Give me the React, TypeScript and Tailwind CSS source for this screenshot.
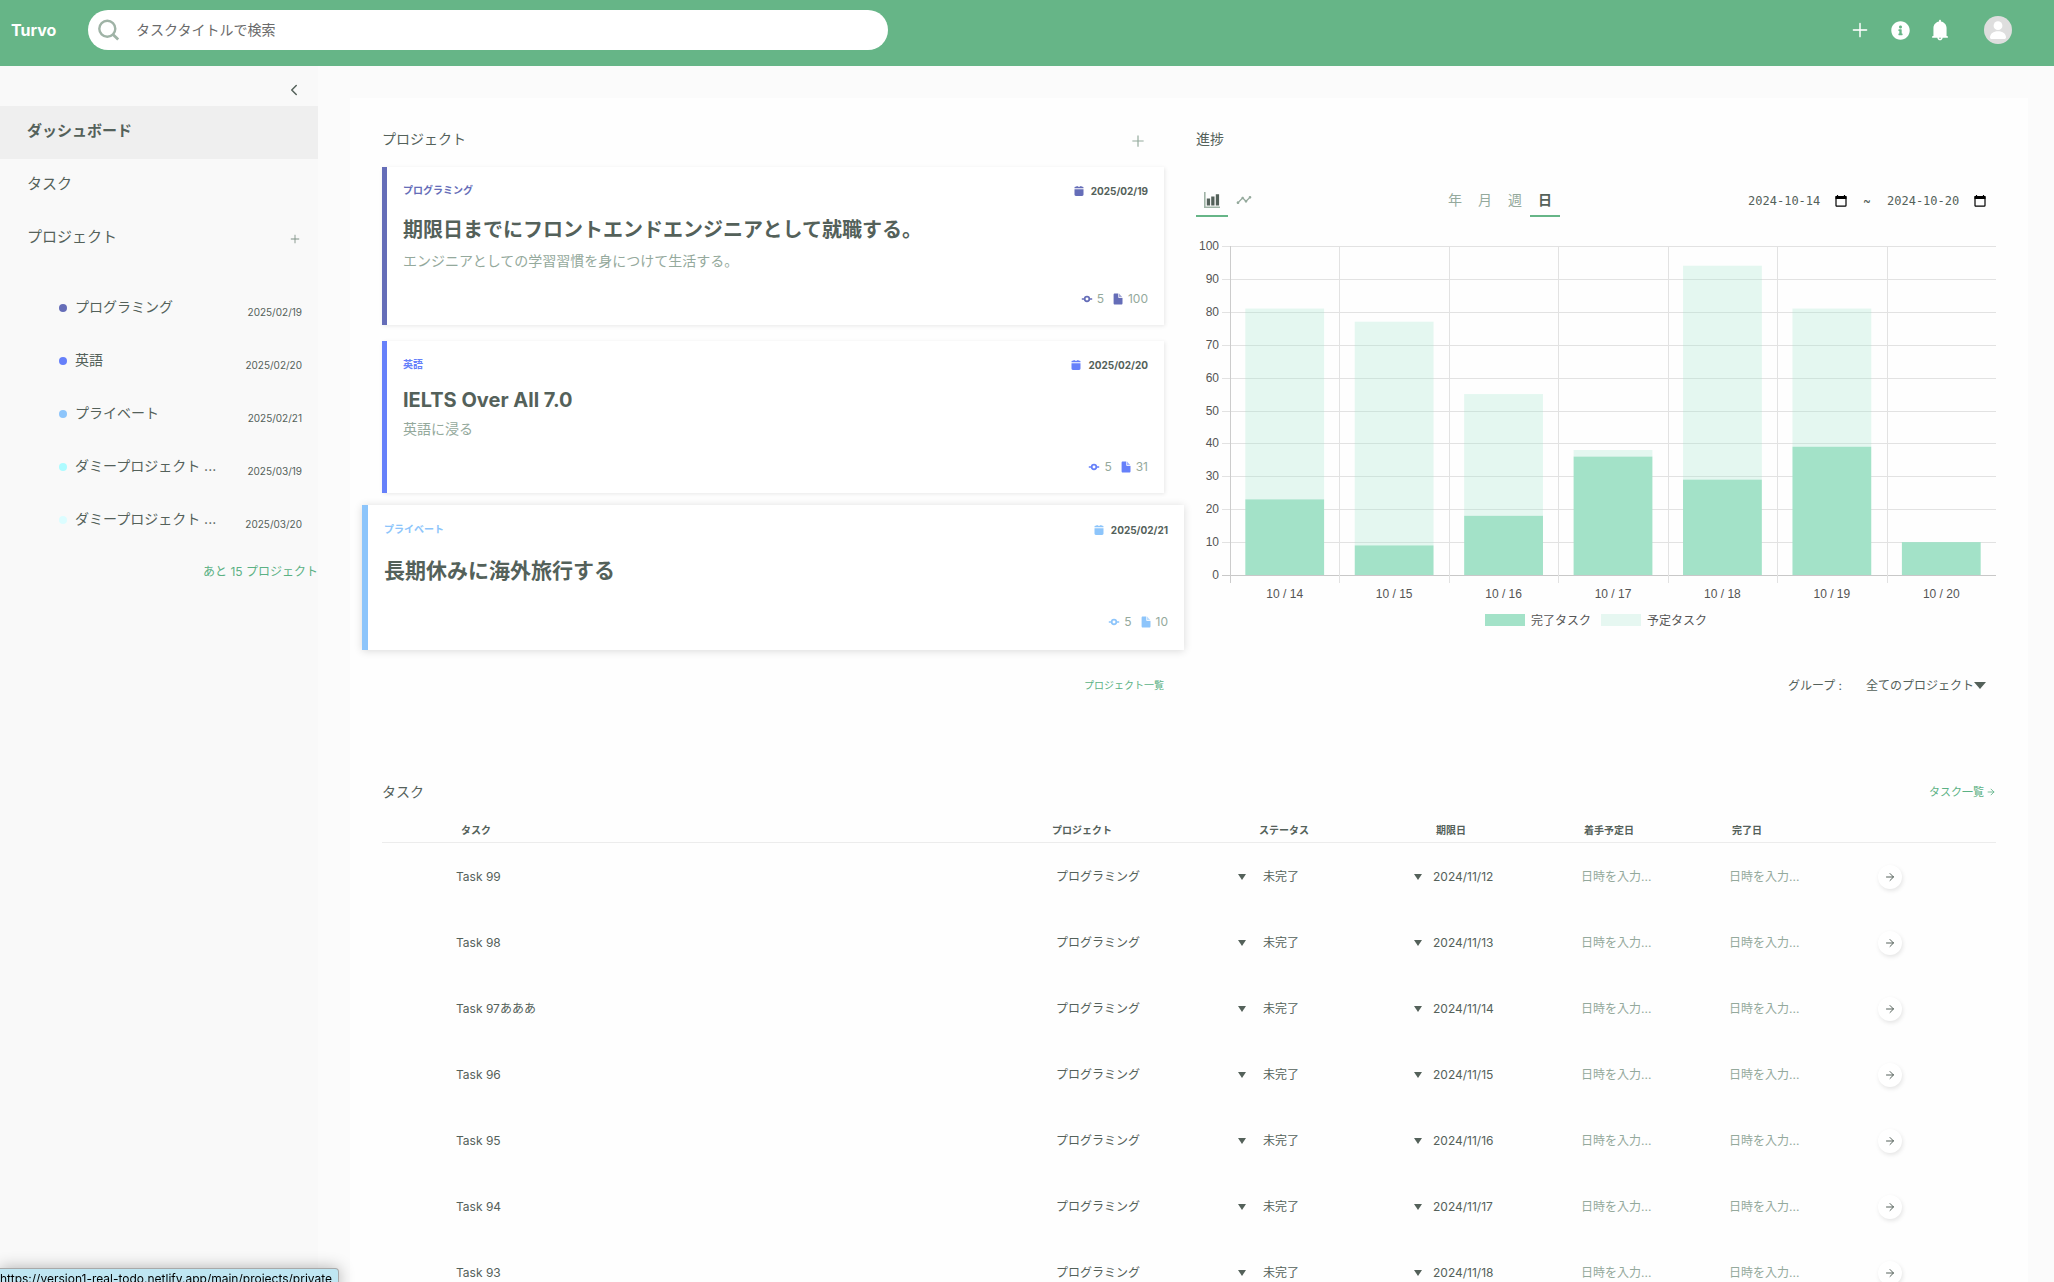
import { useState } from 'react';
import { AiFillBell, AiOutlinePlus } from 'react-icons/ai';
import { FaInfoCircle } from 'react-icons/fa';
import { MdTimeline } from 'react-icons/md';
import { ArrowRight, ChevronLeft, Plus } from 'lucide-react';
import clsx from 'clsx';

interface Project {
  name: string;
  date: string;
  dot: string;
}

interface ProjectCardData {
  tag: string;
  date: string;
  title: string;
  description?: string;
  milestones: number;
  tasks: number;
  border: string;
  text: string;
  latin?: boolean;
  hovered?: boolean;
}

const sidebarProjects: Project[] = [
  { name: 'プログラミング', date: '2025/02/19', dot: 'bg-[#656db8]' },
  { name: '英語', date: '2025/02/20', dot: 'bg-[#6680fa]' },
  { name: 'プライベート', date: '2025/02/21', dot: 'bg-[#8dc5fb]' },
  { name: 'ダミープロジェクト ...', date: '2025/03/19', dot: 'bg-[#adfbff]' },
  { name: 'ダミープロジェクト ...', date: '2025/03/20', dot: 'bg-[#dcfdff]' },
];

const projectCards: ProjectCardData[] = [
  {
    tag: 'プログラミング',
    date: '2025/02/19',
    title: '期限日までにフロントエンドエンジニアとして就職する。',
    description: 'エンジニアとしての学習習慣を身につけて生活する。',
    milestones: 5,
    tasks: 100,
    border: 'border-[#656db8]',
    text: 'text-[#656db8]',
  },
  {
    tag: '英語',
    date: '2025/02/20',
    title: 'IELTS Over All 7.0',
    description: '英語に浸る',
    milestones: 5,
    tasks: 31,
    border: 'border-[#6680fa]',
    text: 'text-[#6680fa]',
    latin: true,
  },
  {
    tag: 'プライベート',
    date: '2025/02/21',
    title: '長期休みに海外旅行する',
    milestones: 5,
    tasks: 10,
    border: 'border-[#8dc5fb]',
    text: 'text-[#8dc5fb]',
    hovered: true,
  },
];

const progress = [
  { label: '10 / 14', done: 23, planned: 81 },
  { label: '10 / 15', done: 9, planned: 77 },
  { label: '10 / 16', done: 18, planned: 55 },
  { label: '10 / 17', done: 36, planned: 38 },
  { label: '10 / 18', done: 29, planned: 94 },
  { label: '10 / 19', done: 39, planned: 81 },
  { label: '10 / 20', done: 10, planned: 10 },
];

const tasks = [
  { title: 'Task 99', due: '2024/11/12' },
  { title: 'Task 98', due: '2024/11/13' },
  { title: 'Task 97あああ', due: '2024/11/14' },
  { title: 'Task 96', due: '2024/11/15' },
  { title: 'Task 95', due: '2024/11/16' },
  { title: 'Task 94', due: '2024/11/17' },
  { title: 'Task 93', due: '2024/11/18' },
];

function CalendarIcon({ className }: { className: string }) {
  return (
    <svg viewBox="0 0 12 12" fill="currentColor" className={clsx('h-3 w-3', className)}>
      <path d="M2.500 1.800h1V1h1.200v.8h2.600V1h1.200v.8h1c.7 0 1 .4 1 1v.5h-9v-.5c0-.6.3-1 1-1Z" />
      <path d="M1.500 4.200h9v5.300c0 .9-.5 1.400-1.400 1.400H2.900c-.9 0-1.400-.5-1.400-1.400Z" />
    </svg>
  );
}

function MilestoneIcon({ className }: { className: string }) {
  return (
    <svg viewBox="0 0 12 12" fill="none" stroke="currentColor" strokeWidth="1.700" className={clsx('h-3 w-3', className)}>
      <circle cx="6" cy="6" r="2.300" />
      <path d="M.8 6h2.900M8.300 6h2.900" />
    </svg>
  );
}

function FileIcon({ className }: { className: string }) {
  return (
    <svg viewBox="0 0 12 12" fill="currentColor" className={clsx('h-3 w-3', className)}>
      <path d="M2.800.5H6.300V4c0 .7.400 1 1 1h3.200v5.300c0 .8-.400 1.200-1.200 1.200H2.800c-.8 0-1.200-.4-1.200-1.200V1.700C1.600.9 2 .5 2.800.5Z" />
      <path d="M7 .6 10.400 4.300H7.600C7.200 4.300 7 4.100 7 3.700Z" opacity="0.6" />
    </svg>
  );
}

function Header() {
  return (
    <header className="flex h-[66px] shrink-0 items-start bg-[#66b587] pt-[10px] text-white">
      <div className="flex h-10 w-[88px] shrink-0 items-center pl-[11px] text-base font-bold">Turvo</div>
      <label className="flex h-10 w-[800px] items-center rounded-full bg-white pl-[9px]">
        <svg viewBox="0 0 24 24" fill="none" stroke="#9fb3a6" strokeWidth="2.400" className="h-6 w-6">
          <circle cx="10.300" cy="10.800" r="8" />
          <path d="m16 16.500 5.200 5" strokeWidth="2.800" />
        </svg>
        <input
          type="search"
          aria-label="タスク検索"
          placeholder="タスクタイトルで検索"
          className="ml-[15px] flex-1 bg-transparent text-sm text-[#54615a] outline-none placeholder:text-[#6a6a6a]"
        />
      </label>
      <div className="ml-auto flex h-10 items-center pr-[42px]">
        <button aria-label="追加" className="flex w-10 justify-center">
          <Plus className="h-[22px] w-[22px] text-white/80" />
        </button>
        <button aria-label="情報" className="flex w-10 justify-center">
          <FaInfoCircle className="h-[19px] w-[19px]" />
        </button>
        <button aria-label="通知" className="flex w-10 justify-center">
          <AiFillBell className="h-6 w-6" />
        </button>
        <button aria-label="アカウント" className="ml-6">
          <svg viewBox="0 0 28 28" className="h-7 w-7">
            <circle cx="14" cy="14" r="14" fill="#dedede" />
            <circle cx="14" cy="9.700" r="4.400" fill="#fff" />
            <path d="M6 21.600c0-4 3.400-6.300 8-6.300s8 2.300 8 6.300c0 .9-.6 1.300-1.300 1.300H7.300C6.600 22.900 6 22.500 6 21.600Z" fill="#fff" />
          </svg>
        </button>
      </div>
    </header>
  );
}

function Sidebar() {
  return (
    <nav className="w-[318px] shrink-0 bg-[#f9f9f9]">
      <div className="flex h-10 items-center justify-end pt-2 pr-[15px]">
        <button aria-label="サイドバーを閉じる">
          <ChevronLeft className="h-[18px] w-[18px]" />
        </button>
      </div>
      <a href="#dashboard" className="flex h-[53px] items-center bg-[#efefef] px-[27px] pb-[2px] text-[15px] font-bold">
        ダッシュボード
      </a>
      <a href="#tasks" className="flex h-[53px] items-center px-[27px] pb-[2px] text-[15px]">
        タスク
      </a>
      <div className="flex h-[53px] items-center justify-between pr-[17px] pb-[2px] pl-[27px] text-[15px]">
        <a href="#projects">プロジェクト</a>
        <button aria-label="プロジェクトを追加" className="pt-[2px]">
          <AiOutlinePlus className="h-3 w-3 text-[#7f9186]" />
        </button>
      </div>
      <ul className="mt-4">
        {sidebarProjects.map((project) => (
          <li key={project.date}>
            <a href="#project" className="flex h-[53px] items-center pr-4 pl-[59px]">
              <span className={clsx('mr-2 h-2 w-2 rounded-full', project.dot)} />
              <span className="flex-1 truncate pb-[2px] text-sm">{project.name}</span>
              <span className="pt-[10px] text-[10px]">{project.date}</span>
            </a>
          </li>
        ))}
      </ul>
      <div className="flex justify-end pt-[18px]">
        <a href="#projects" className="text-xs text-[#5bb184]">あと 15 プロジェクト</a>
      </div>
    </nav>
  );
}

function ProjectCard({ card }: { card: ProjectCardData }) {
  return (
    <article
      className={clsx(
        'bg-white',
        card.border,
        card.hovered
          ? '-mx-5 -mt-1 border-l-6 px-4 pt-[17px] pb-[18px] shadow-[0_1px_8px_rgba(0,0,0,0.15)]'
          : 'border-l-5 p-4 shadow-[1px_1px_4px_rgba(0,0,0,0.09)]',
      )}
    >
      <div className="flex h-[15px] items-center justify-between text-[10px] font-bold">
        <span className={card.text}>{card.tag}</span>
        <span className="flex items-center gap-[6px] pt-px">
          <CalendarIcon className={card.text} />
          {card.date}
        </span>
      </div>
      <h3
        className={clsx(
          'flex items-center font-bold',
          card.hovered ? 'mt-4 h-9 text-[21px]' : 'text-xl',
          !card.hovered && (card.latin ? 'mt-4 h-6' : 'mt-[17px] h-[30px]'),
        )}
      >
        {card.title}
      </h3>
      {card.description && (
        <p className={clsx('text-sm leading-5 text-[#94a99c]', card.latin ? 'mt-[7px]' : 'mt-[6px]')}>{card.description}</p>
      )}
      <div
        className={clsx(
          'flex h-5 items-center justify-end text-xs text-[#94a99c]',
          card.hovered ? 'mt-[23px]' : 'mt-[18px]',
        )}
      >
        <MilestoneIcon className={clsx('mr-1', card.text)} />
        {card.milestones}
        <FileIcon className={clsx('mr-1 ml-2', card.text)} />
        {card.tasks}
      </div>
    </article>
  );
}

// Plot area inside the 800x390 canvas
const LEFT = 34;
const RIGHT = 800;
const TOP = 6;
const BOTTOM = 335;
const STEP = (RIGHT - LEFT) / progress.length;
const BAR = STEP * 0.72;

const yOf = (value: number) => BOTTOM - ((BOTTOM - TOP) * value) / 100;

function ProgressChart() {
  const ticks = Array.from({ length: 11 }, (_, i) => i * 10);
  return (
    <svg viewBox="0 0 800 390" className="mt-[23px] w-full font-['Liberation_Sans','Noto_Sans_CJK_JP',sans-serif] text-xs">
      {ticks.map((tick) => (
        <g key={tick}>
          <rect x={LEFT - 8} y={Math.round(yOf(tick))} width={RIGHT - LEFT + 8} height="1" fill={tick === 0 ? '#c8c8c8' : '#e2e2e2'} />
          <text x="23" y={yOf(tick) + 4} textAnchor="end" fill="#555">{tick}</text>
        </g>
      ))}
      {progress.map((day, i) => {
        const x = LEFT + i * STEP;
        const barX = x + (STEP - BAR) / 2;
        return (
          <g key={day.label}>
            <rect x={Math.round(x)} y={TOP} width="1" height={BOTTOM - TOP + 8} fill={i === 0 ? '#cccccc' : '#e2e2e2'} />
            <rect x={barX} y={yOf(day.planned)} width={BAR} height={yOf(day.done) - yOf(day.planned)} fill="#a0e6cc" fillOpacity="0.27" />
            <rect x={barX} y={yOf(day.done)} width={BAR} height={BOTTOM - yOf(day.done)} fill="#a3e2c8" />
            <text x={x + STEP / 2} y="358" textAnchor="middle" fill="#555">{day.label}</text>
          </g>
        );
      })}
      <rect x="289" y="374" width="40" height="12" fill="#a3e2c8" />
      <text x="335" y="385" fill="#555">完了タスク</text>
      <rect x="405" y="374" width="40" height="12" fill="#e6f7f1" />
      <text x="451" y="385" fill="#555">予定タスク</text>
    </svg>
  );
}

function DateField({ label, initial }: { label: string; initial: string }) {
  const [value, setValue] = useState(initial);
  return (
    <label className="flex items-center">
      <input
        type="text"
        aria-label={label}
        value={value}
        onChange={(e) => setValue(e.target.value)}
        className="mr-3 w-[75px] bg-transparent font-['DejaVu_Sans_Mono','Liberation_Mono',monospace] text-xs outline-none"
      />
      <svg viewBox="0 0 12 12" className="h-3 w-3 text-black">
        <path d="M2.500 0v1.500M9.500 0v1.500" stroke="currentColor" strokeWidth="1.200" />
        <rect x="1" y="1.500" width="10" height="9.700" rx="0.800" fill="none" stroke="currentColor" strokeWidth="1.200" />
        <rect x="0.500" y="1" width="11" height="3" fill="currentColor" />
      </svg>
    </label>
  );
}

function ProgressSection() {
  const [unit, setUnit] = useState('日');
  const [chart, setChart] = useState('bar');
  const tab = 'flex h-8 justify-center border-b-2 pt-[7px]';
  return (
    <section className="flex flex-col">
      <h2 className="flex h-[34px] items-center text-sm">進捗</h2>
      <div className="mt-[29px] flex items-start justify-between">
        <div className="flex">
          <button
            aria-label="棒グラフ"
            onClick={() => setChart('bar')}
            className={clsx(tab, 'w-8', chart === 'bar' ? 'border-[#66b587]' : 'border-transparent')}
          >
            <svg viewBox="0 0 16 16" className="h-4 w-4">
              <path d="M.8 0v15.200H16" fill="none" stroke="#9fb3a6" strokeWidth="1.600" />
              <path d="M2.800 6.500h3.300V13.500H2.800zM7.200 4.500h3.300v9H7.200zM11.800 2.300h3.300v11.200h-3.300z" fill="#54615a" />
            </svg>
          </button>
          <button
            aria-label="折れ線グラフ"
            onClick={() => setChart('line')}
            className={clsx(tab, 'w-8', chart === 'line' ? 'border-[#66b587]' : 'border-transparent')}
          >
            <MdTimeline className="h-4 w-4 text-[#94a99c]" />
          </button>
        </div>
        <div className="flex text-sm leading-4">
          {['年', '月', '週', '日'].map((label) => (
            <button
              key={label}
              onClick={() => setUnit(label)}
              className={clsx(tab, 'w-[30px]', unit === label ? 'border-[#66b587] font-bold' : 'border-transparent text-[#94a99c]')}
            >
              {label}
            </button>
          ))}
        </div>
        <div className="flex h-8 items-center gap-4 pr-[10px] pl-2 text-xs">
          <DateField label="開始日" initial="2024-10-14" />
          <span>~</span>
          <DateField label="終了日" initial="2024-10-20" />
        </div>
      </div>
      <ProgressChart />
      <div className="mt-auto flex h-5 items-center justify-end pt-px pr-[10px] text-xs">
        <label htmlFor="group">グループ :</label>
        <div className="ml-6 flex items-center">
          <select id="group" className="w-[108px] appearance-none bg-transparent outline-none">
            <option>全てのプロジェクト</option>
          </select>
          <Caret className="h-[7px] w-3" />
        </div>
      </div>
    </section>
  );
}

function Caret({ className }: { className: string }) {
  return (
    <svg viewBox="0 0 12 8" preserveAspectRatio="none" className={clsx('pointer-events-none shrink-0', className)}>
      <path d="M0 0h12L6 8z" fill="#54615a" />
    </svg>
  );
}

function SelectCell({ label, value }: { label: string; value: string }) {
  return (
    <td className="pr-2 pl-[9px]">
      <div className="flex items-center">
        <select aria-label={label} className="min-w-0 flex-1 appearance-none bg-transparent outline-none">
          <option>{value}</option>
        </select>
        <Caret className="h-[6px] w-2" />
      </div>
    </td>
  );
}

function DateCell({ label, value }: { label: string; value?: string }) {
  return (
    <td className="pl-[3px]">
      <input
        type="text"
        aria-label={label}
        defaultValue={value}
        placeholder="日時を入力..."
        className="w-full bg-transparent outline-none placeholder:text-[#94a99c]"
      />
    </td>
  );
}

function TaskSection() {
  return (
    <section className="mt-20">
      <div className="flex h-[34px] items-center justify-between">
        <h2 className="text-sm">タスク</h2>
        <a href="#tasks" className="flex items-center gap-[2px] text-[11px] text-[#5bb184]">
          タスク一覧
          <ArrowRight className="h-[10px] w-[10px]" />
        </a>
      </div>
      <table className="mt-2 w-full table-fixed border-collapse text-left text-xs">
        <colgroup>
          <col className="w-[74px]" />
          <col />
          <col className="w-[207px]" />
          <col className="w-[176px]" />
          <col className="w-[148px]" />
          <col className="w-[148px]" />
          <col className="w-[148px]" />
          <col className="w-[122px]" />
        </colgroup>
        <thead>
          <tr className="h-[25px] border-b border-[#ececec] text-[10px] [&_th]:pt-[3px]">
            <th />
            <th className="pl-[5px]">タスク</th>
            <th className="pl-[5px]">プロジェクト</th>
            <th className="pl-[5px]">ステータス</th>
            <th className="pl-[6px]">期限日</th>
            <th className="pl-[6px]">着手予定日</th>
            <th className="pl-[6px]">完了日</th>
            <th />
          </tr>
        </thead>
        <tbody>
          {tasks.map((task) => (
            <tr key={task.title} className="h-[66px] [&_td]:pt-[3px]">
              <td />
              <td>{task.title}</td>
              <SelectCell label="プロジェクト" value="プログラミング" />
              <SelectCell label="ステータス" value="未完了" />
              <DateCell label="期限日" value={task.due} />
              <DateCell label="着手予定日" />
              <DateCell label="完了日" />
              <td className="pl-1">
                <button
                  aria-label="詳細"
                  className="flex h-6 w-6 items-center justify-center rounded-full bg-white shadow-[1px_2px_4px_rgba(0,0,0,0.1)]"
                >
                  <ArrowRight className="h-3 w-3" />
                </button>
              </td>
            </tr>
          ))}
        </tbody>
      </table>
    </section>
  );
}

export default function App() {
  return (
    <div className="flex h-screen flex-col overflow-hidden bg-[#fbfbfb] font-['Inter','Noto_Sans_CJK_JP',sans-serif] text-[#54615a]">
      <Header />
      <div className="flex min-h-0 flex-1">
        <Sidebar />
        <main className="min-w-0 flex-1 overflow-hidden pt-8 pr-[26px] pl-8">
          <div className="bg-[#fefefe] px-8 pt-6 pb-8">
            <div className="grid grid-cols-[782fr_800fr] gap-8">
              <section className="flex flex-col">
                <div className="flex h-[34px] items-center justify-between pr-[18px]">
                  <h2 className="text-sm">プロジェクト</h2>
                  <button aria-label="プロジェクトを追加" className="pt-[3px]">
                    <AiOutlinePlus className="h-4 w-4 text-[#94a99c]" />
                  </button>
                </div>
                <div className="mt-[11px] flex flex-col gap-4">
                  {projectCards.map((card) => (
                    <ProjectCard key={card.tag} card={card} />
                  ))}
                </div>
                <div className="mt-[25px] flex h-5 items-center justify-end">
                  <a href="#projects" className="text-[10px] text-[#5bb184]">プロジェクト一覧</a>
                </div>
              </section>
              <ProgressSection />
            </div>
            <TaskSection />
          </div>
        </main>
      </div>
      {/* Browser link preview */}
      <div className="fixed -bottom-2 left-0 h-[22px] rounded-tr border border-l-0 border-[#a9a9a9] bg-[#bfe6f2] pr-[6px] text-xs leading-5 text-black shadow-[0_0_16px_rgba(0,0,0,0.3)]">
        https://version1-real-todo.netlify.app/main/projects/private
      </div>
    </div>
  );
}
